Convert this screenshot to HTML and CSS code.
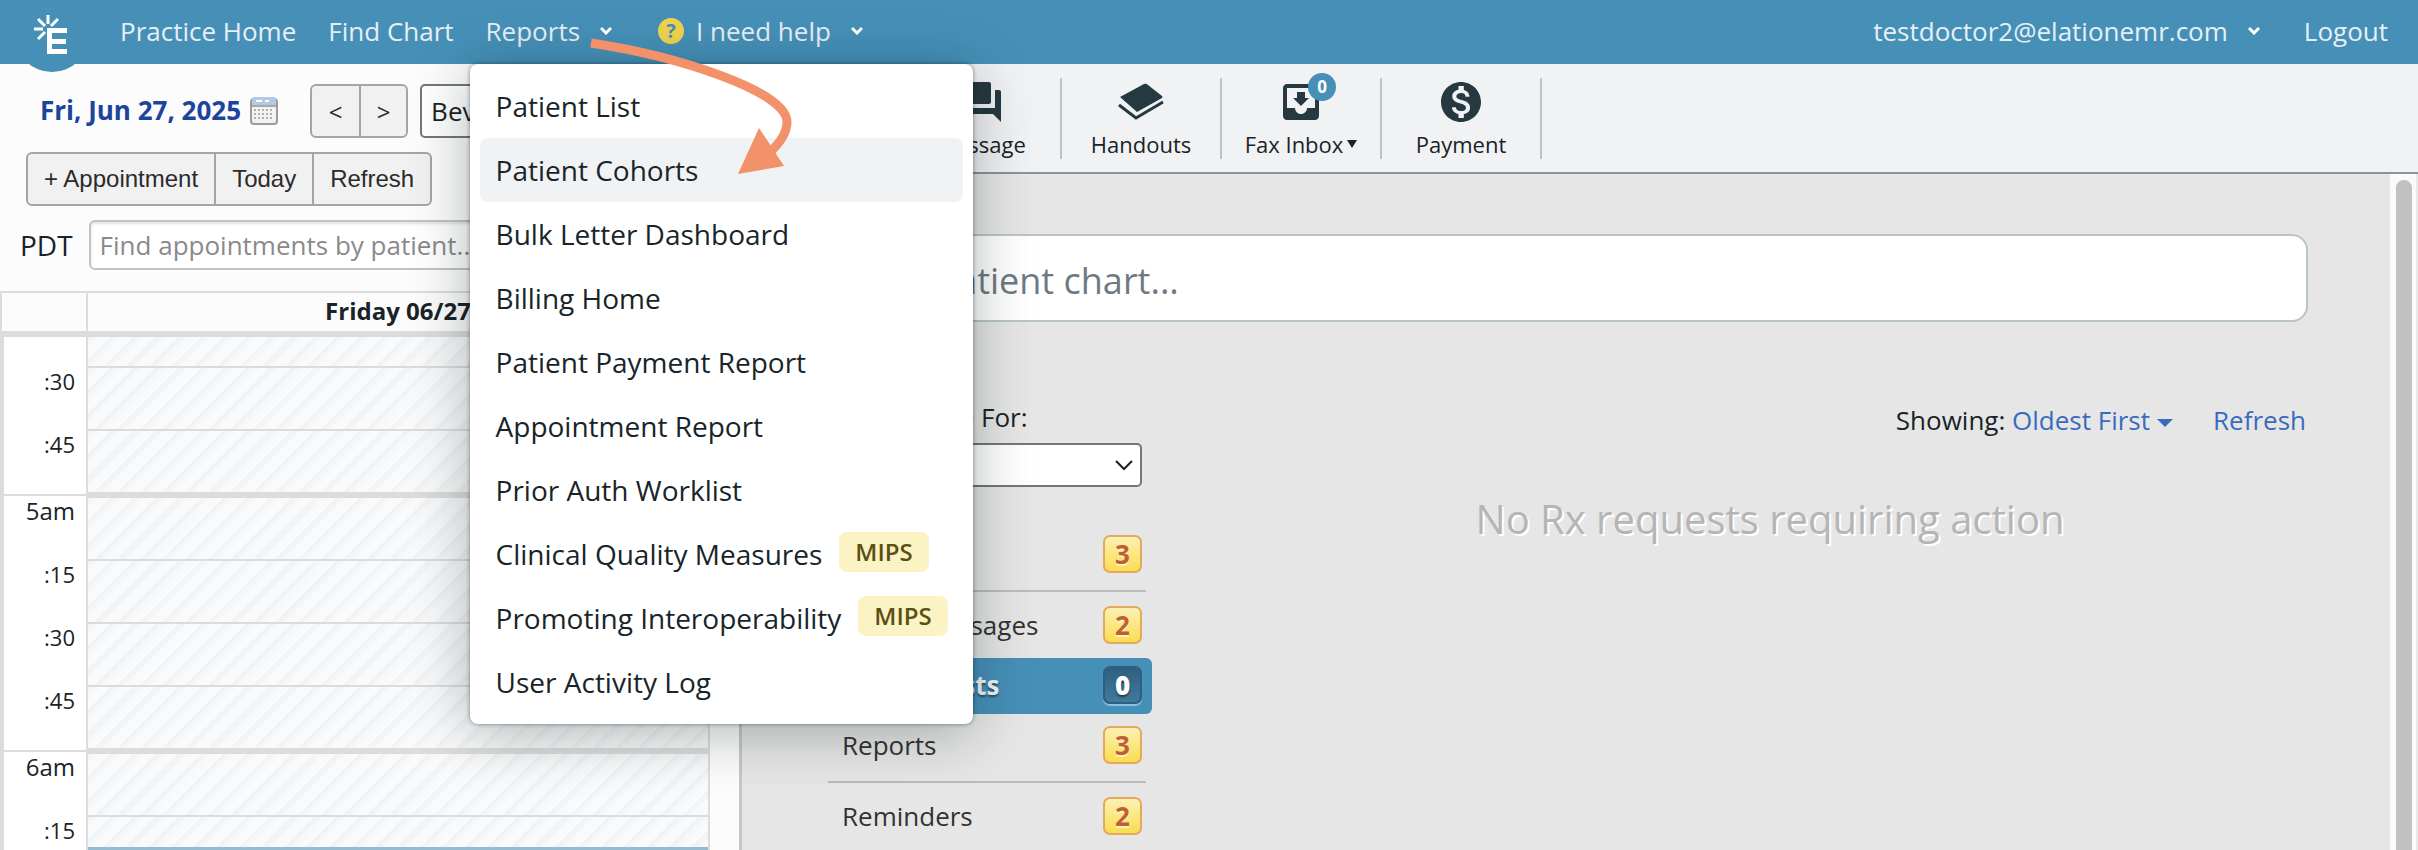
FILE: index.html
```html
<!DOCTYPE html>
<html lang="en">
<head>
<meta charset="utf-8">
<title>Practice Home</title>
<link rel="stylesheet" href="styles.css">
</head>
<body>
<header class="topbar">
  <a class="logo" href="#" aria-label="Elation">
    <svg viewBox="0 0 74 72" width="74" height="72" aria-hidden="true">
      <g stroke="#fff" stroke-width="3" fill="none">
        <path d="M33 15v9M23 19l7 7M43 19l-7 7M19 29h9M23 39l7-7"/>
      </g>
      <path d="M32 28h20v5H37v6h14v5H37v5h15v5H32z" fill="#fff"/>
    </svg>
  </a>
  <nav class="nav">
    <a href="#">Practice Home</a>
    <a href="#">Find Chart</a>
    <div class="nav-drop">
      <button class="nav-button" type="button" aria-expanded="true">Reports
        <svg class="chev" viewBox="0 0 12 8" width="12" height="8" aria-hidden="true"><path d="M1 1l5 5 5-5"/></svg>
      </button>
      <div class="menu">
        <a href="#">Patient List</a>
        <a href="#" class="is-hover">Patient Cohorts</a>
        <a href="#">Bulk Letter Dashboard</a>
        <a href="#">Billing Home</a>
        <a href="#">Patient Payment Report</a>
        <a href="#">Appointment Report</a>
        <a href="#">Prior Auth Worklist</a>
        <a href="#">Clinical Quality Measures <span class="mips">MIPS</span></a>
        <a href="#">Promoting Interoperability <span class="mips">MIPS</span></a>
        <a href="#">User Activity Log</a>
      </div>
      <svg class="arrow" viewBox="0 0 210 140" width="210" height="140" aria-hidden="true">
        <path d="M4 7C90 20 200 55 200 86c0 12-8 22-18 31" fill="none" stroke="#f2916a" stroke-width="9"/>
        <path d="M151 138l21-46 25 38z" fill="#f2916a"/>
      </svg>
    </div>
    <button class="nav-button help" type="button">
      <span class="q" aria-hidden="true">?</span>I need help
      <svg class="chev" viewBox="0 0 12 8" width="12" height="8" aria-hidden="true"><path d="M1 1l5 5 5-5"/></svg>
    </button>
  </nav>
  <div class="account">
    <button class="nav-button" type="button">testdoctor2@elationemr.com
      <svg class="chev" viewBox="0 0 12 8" width="12" height="8" aria-hidden="true"><path d="M1 1l5 5 5-5"/></svg>
    </button>
    <a href="#">Logout</a>
  </div>
</header>
<div class="body">
  <aside class="schedule">
    <div class="controls">
      <div class="row date-row">
        <strong class="date">Fri, Jun 27, 2025</strong>
        <svg class="cal" viewBox="0 0 30 30" width="30" height="30" aria-hidden="true">
          <rect x="1" y="2" width="28" height="27" rx="4" fill="#9c9c9c"/>
          <rect x="3" y="1" width="24" height="26" rx="2" fill="#f3f3f3"/>
          <path d="M3 3q0-2 2-2h20q2 0 2 2v6H3z" fill="#b4c8e6"/>
          <path d="M3 10h24" stroke="#a8a8a8" stroke-width="2"/>
          <path d="M7 5h6M16 5h4" stroke="#fff" stroke-width="2"/>
          <path d="M5 14h20M5 18h20M5 22h20" stroke="#b0b0b0" stroke-width="2" stroke-dasharray="2 2"/>
        </svg>
        <div class="group">
          <button type="button" class="step">&lt;</button><button type="button" class="step">&gt;</button>
        </div>
        <select class="provider" aria-label="Provider"><option>Bev</option></select>
      </div>
      <div class="row">
        <div class="group actions">
          <button type="button">+ Appointment</button><button type="button">Today</button><button type="button">Refresh</button>
        </div>
      </div>
      <div class="row find-row">
        <label for="find">PDT</label>
        <input id="find" type="text" placeholder="Find appointments by patient...">
      </div>
    </div>
    <div class="calendar">
      <div class="cal-head"><span></span><strong>Friday 06/27</strong></div>
      <div class="slot first"><span></span><i></i></div>
      <div class="slot"><span>:30</span><i></i></div>
      <div class="slot"><span>:45</span><i></i></div>
      <div class="slot hour"><span>5am</span><i></i></div>
      <div class="slot"><span>:15</span><i></i></div>
      <div class="slot"><span>:30</span><i></i></div>
      <div class="slot"><span>:45</span><i></i></div>
      <div class="slot hour"><span>6am</span><i></i></div>
      <div class="slot now"><span>:15</span><i></i></div>
    </div>
  </aside>
  <main class="main">
    <div class="toolbar">
      <div class="tool"></div>
      <a class="tool" href="#">
        <svg viewBox="0 0 24 24" width="48" height="48" aria-hidden="true"><path d="M21 6h-2v9H6v2c0 .55.45 1 1 1h11l4 4V7c0-.55-.45-1-1-1zm-4 6V3c0-.55-.45-1-1-1H3c-.55 0-1 .45-1 1v14l4-4h10c.55 0 1-.45 1-1z"/></svg>
        <span>Message</span>
      </a>
      <a class="tool" href="#">
        <svg viewBox="0 0 48 48" width="48" height="48" aria-hidden="true"><path d="M3 19L27 6q2-1 4 1l14 11q1 1 0 2L20 34z"/><path d="M2 27l17 13 27-16" fill="none" stroke="#263940" stroke-width="3"/></svg>
        <span>Handouts</span>
      </a>
      <a class="tool" href="#">
        <svg viewBox="0 0 24 24" width="48" height="48" aria-hidden="true"><path d="M19 3H5c-1.100 0-2 .9-2 2v14c0 1.100.89 2 2 2h14c1.100 0 2-.9 2-2V5c0-1.100-.9-2-2-2zm0 12h-4c0 1.660-1.350 3-3 3s-3-1.340-3-3H5V5h14v10zm-3-5h-2V7h-4v3H8l4 4 4-4z"/></svg>
        <span class="count">0</span>
        <span>Fax Inbox<b class="tri"></b></span>
      </a>
      <a class="tool" href="#">
        <svg viewBox="0 0 24 24" width="48" height="48" aria-hidden="true"><path d="M12 2C6.480 2 2 6.480 2 12s4.480 10 10 10 10-4.480 10-10S17.520 2 12 2zm1.410 16.090V20h-2.670v-1.930c-1.710-.36-3.160-1.460-3.270-3.400h1.960c.1 1.050.82 1.870 2.650 1.870 1.960 0 2.400-.98 2.400-1.590 0-.83-.44-1.610-2.670-2.140-2.480-.6-4.180-1.620-4.180-3.670 0-1.720 1.390-2.840 3.110-3.210V4h2.670v1.950c1.860.45 2.790 1.860 2.850 3.390H14.300c-.05-1.110-.64-1.870-2.220-1.870-1.500 0-2.400.68-2.400 1.640 0 .84.65 1.390 2.670 1.910s4.180 1.390 4.180 3.910c-.01 1.830-1.380 2.830-3.120 3.160z"/></svg>
        <span>Payment</span>
      </a>
    </div>
    <div class="scroller">
      <div class="content">
        <input class="search" type="text" aria-label="Find patient chart" placeholder="Find patient chart...">
        <div class="columns">
          <section class="queue">
            <label class="for" for="home">Show Home For:</label>
            <select id="home" class="home-select"><option></option></select>
            <div class="queue-list">
              <div class="queue-group">
                <a href="#"><span></span><b class="n">3</b></a>
              </div>
              <div class="queue-group">
                <a href="#"><span>Office Messages</span><b class="n">2</b></a>
                <a href="#" class="active"><span>Rx Requests</span><b class="n">0</b></a>
                <a href="#"><span>Reports</span><b class="n">3</b></a>
              </div>
              <div class="queue-group">
                <a href="#"><span>Reminders</span><b class="n">2</b></a>
              </div>
            </div>
          </section>
          <section class="results">
            <div class="sort"><span>Showing: <a href="#">Oldest First<b class="tri"></b></a></span><a href="#">Refresh</a></div>
            <p class="empty">No Rx requests requiring action</p>
          </section>
        </div>
      </div>
      <div class="track"><div class="thumb"></div></div>
    </div>
  </main>
</div>
</body>
</html>
```
FILE: styles.css
```css
* { box-sizing: border-box; }
html, body { height: 100%; }
body {
  margin: 0;
  display: flex;
  flex-direction: column;
  overflow: hidden;
  font-family: "Open Sans", "Noto Sans", sans-serif;
  font-size: 26px;
  color: #1a2327;
  background: #fcfcfc;
}
a { color: inherit; text-decoration: none; }
button, input, select { font: inherit; color: inherit; }

/* Top bar */
.topbar {
  position: relative;
  z-index: 5;
  flex: none;
  height: 64px;
  display: flex;
  align-items: center;
  padding: 0 30px 2px 15px;
  background: #4690b8;
  color: #e6eff5;
}
.logo { align-self: flex-start; width: 74px; height: 72px; flex: none; border-radius: 0 0 37px 37px; background: #4690b8; }
.logo svg { display: block; }
.nav { display: flex; align-items: center; gap: 32px; margin-left: 31px; }
.nav-drop { position: relative; }
.nav-button {
  display: flex;
  align-items: center;
  padding: 0;
  border: 0;
  background: none;
  color: inherit;
}
.chev { margin-left: 20px; fill: none; stroke: #fff; stroke-width: 3; }
.help { margin-left: 14px; }
.q {
  width: 26px;
  height: 26px;
  margin-right: 12px;
  border-radius: 50%;
  background: #f0d44e;
  color: #4690b8;
  font-size: 20px;
  font-weight: 700;
  line-height: 26px;
  text-align: center;
}
.account { display: flex; align-items: center; gap: 44px; margin-left: auto; }

.menu {
  position: absolute;
  top: 51px;
  left: -16px;
  width: 503px;
  padding: 10px;
  border-radius: 8px;
  background: #fff;
  color: #17252a;
  box-shadow: 0 0 4px rgba(0, 20, 20, .45), 0 8px 60px rgba(0, 20, 20, .3);
}
.menu a {
  display: flex;
  align-items: center;
  height: 64px;
  padding: 0 16px;
  border-radius: 8px;
  font-size: 28px;
  white-space: nowrap;
}
.menu .is-hover { background: #f1f2f4; }
.mips {
  height: 40px;
  margin: 0 0 4px 17px;
  padding: 0 16px;
  border-radius: 8px;
  background: #fbf3c3;
  color: #5b5012;
  font-size: 24px;
  font-weight: 600;
  line-height: 40px;
}
.arrow { position: absolute; top: 23px; left: 101px; pointer-events: none; }

/* Schedule */
.body { flex: 1; display: flex; min-height: 0; }
.schedule { flex: none; width: 742px; display: flex; flex-direction: column; border-right: 3px solid #c6c8c8; overflow: hidden; }
.controls { display: flex; flex-direction: column; gap: 14px; padding: 20px 33px 21px 20px; }
.row { display: flex; align-items: center; }
.date { margin-left: 20px; padding-bottom: 2px; color: #1c449b; }
.cal { margin-left: 8px; }
.group { display: flex; margin-left: 31px; border: 2px solid #a5a5a5; border-radius: 6px; background: #f1f1f1; overflow: hidden; }
.group button {
  height: 50px;
  padding: 0 16px;
  border: 0;
  background: none;
  color: #2b2b2b;
  font-family: "Liberation Sans", Arial, sans-serif;
  font-size: 24px;
}
.group button + button { border-left: 2px solid #a5a5a5; }
.group .step { width: 47px; padding: 0; font-family: inherit; }
.actions { margin-left: 6px; }
.provider { flex: 1; height: 54px; margin-left: 12px; padding: 0 9px; border: 2px solid #767676; border-radius: 5px; background: #fff; appearance: none; }
.find-row { gap: 16px; }
.find-row label { font-size: 28px; }
.find-row input { flex: 1; height: 50px; padding: 0 9px; border: 2px solid #c3c3c3; border-radius: 6px; background: #fff; box-shadow: inset 0 2px 3px rgba(0, 0, 0, .12); }
.find-row input::placeholder { color: #8a8a8a; opacity: 1; }

.calendar { flex: 1; min-height: 0; overflow: hidden; margin-right: 29px; border-right: 2px solid #dcdcdc; }
.cal-head, .slot { display: grid; grid-template-columns: 88px 1fr; }
.cal-head { height: 46px; border: 2px solid #dcdcdc; border-right: 0; border-bottom-width: 6px; grid-template-columns: 86px 1fr; }
.cal-head span, .slot span { border-right: 2px solid #dcdcdc; }
.cal-head strong { font-size: 24px; line-height: 36px; text-align: center; }
.slot { height: 63px; }
.slot span { padding: 0 11px 0 0; border-left: 4px solid #dcdcdc; background: #fff; font-size: 22px; line-height: 26px; text-align: right; }
.slot i {
  border-bottom: 2px solid #dcdcdc;
  background: repeating-linear-gradient(135deg, #eff1f3 0, #f8fafb 8px, #f8fafb 16px);
}
.slot.first { height: 31px; }
.slot.hour { height: 67px; }
.slot.hour span { border-top: 2px solid #dcdcdc; font-size: 24px; line-height: 30px; }
.slot.hour i { border-top: 4px solid #dcdcdc; }
.slot.now { height: 100px; }
.slot.now i { align-self: start; height: 33px; border-bottom: 3px solid #96bcd2; }

/* Main */
.main { flex: 1; min-width: 0; display: flex; flex-direction: column; background: #e6e6e6; }
.toolbar { flex: none; display: flex; height: 110px; padding-top: 14px; background: #f1f2f4; border-bottom: 2px solid #87939f; }
.tool {
  position: relative;
  width: 160px;
  height: 81px;
  display: flex;
  flex-direction: column;
  align-items: center;
  border-right: 2px solid #b9c6c9;
  font-size: 22px;
  line-height: 36px;
}
.tool svg { flex: none; fill: #263940; }
.tool .count {
  position: absolute;
  top: -5px;
  left: 86px;
  width: 28px;
  height: 28px;
  border-radius: 50%;
  background: #4690b8;
  color: #fff;
  font-size: 17px;
  font-weight: 700;
  line-height: 28px;
  text-align: center;
}
.tri { display: inline-block; margin-left: 4px; border: 5px solid transparent; border-top: 8px solid currentColor; border-bottom: 0; vertical-align: 5px; }
.scroller { flex: 1; display: flex; min-height: 0; }
.content { flex: 1; min-width: 0; padding: 60px 82px 0 86px; }
.track { width: 28px; padding: 6px 4px 0 6px; background: #fafafa; border-right: 2px solid #e8e8e8; }
.thumb { height: 100%; border-radius: 8px 8px 0 0; background: #c1c1c1; }
.search { display: block; width: 100%; height: 88px; padding: 4px 24px 0; border: 2px solid #b9c6c9; border-radius: 16px; background: #fff; font-size: 36px; }
.search::placeholder { color: #6d7a83; opacity: 1; }
.columns { display: flex; gap: 80px; padding-top: 77px; }
.queue { flex: none; width: 324px; }
.for { display: block; line-height: 36px; }
.home-select {
  display: block;
  width: 314px;
  height: 44px;
  margin-top: 8px;
  border: 2px solid #767676;
  border-radius: 5px;
  appearance: none;
  background: #fff url("data:image/svg+xml,%3Csvg xmlns='http://www.w3.org/2000/svg' width='18' height='11' fill='none' stroke='%231a2327' stroke-width='2'%3E%3Cpath d='M1 1l8 8 8-8'/%3E%3C/svg%3E") no-repeat right 7px center;
}
.queue-list { padding-top: 40px; }
.queue-group { display: flex; flex-direction: column; gap: 4px; }
.queue-group + .queue-group::before { content: ""; margin: 7px 6px 2px 0; border-top: 2px solid #bcbcbc; }
.queue-group a { display: flex; align-items: center; height: 56px; padding: 0 10px 2px 14px; border-radius: 6px; color: #333; }
.queue-group a span { flex: 1; }
.queue-group .active { background: #4690b8; color: #eef4f8; font-weight: 700; text-shadow: 0 2px 2px rgba(0, 0, 0, .45); }
.n {
  width: 39px;
  height: 38px;
  border: 2px solid #e5a95e;
  border-radius: 7px;
  background: linear-gradient(#fcf1b4, #fadd50);
  color: #c05f33;
  font-size: 26px;
  line-height: 34px;
  text-align: center;
  text-shadow: 0 2px 0 #fff3c0;
}
.active .n { border-color: #2d5f80; background: linear-gradient(#2d5f80, #417a9e); color: #fff; text-shadow: 0 2px 2px rgba(0, 0, 0, .5); box-shadow: 0 2px 1px #8cc0e0; }
.results { flex: 1; }
.sort { display: flex; justify-content: flex-end; gap: 40px; padding: 3px 2px 0 0; line-height: 36px; }
.sort a { color: #3a6bbd; }
.sort .tri { border-width: 8px 8px 0; margin-left: 7px; vertical-align: 3px; }
.empty { margin: 53px 0 0; color: #b5b5b5; font-size: 40px; line-height: 56px; text-align: center; text-shadow: 2px 2px 0 #fff; }
```
